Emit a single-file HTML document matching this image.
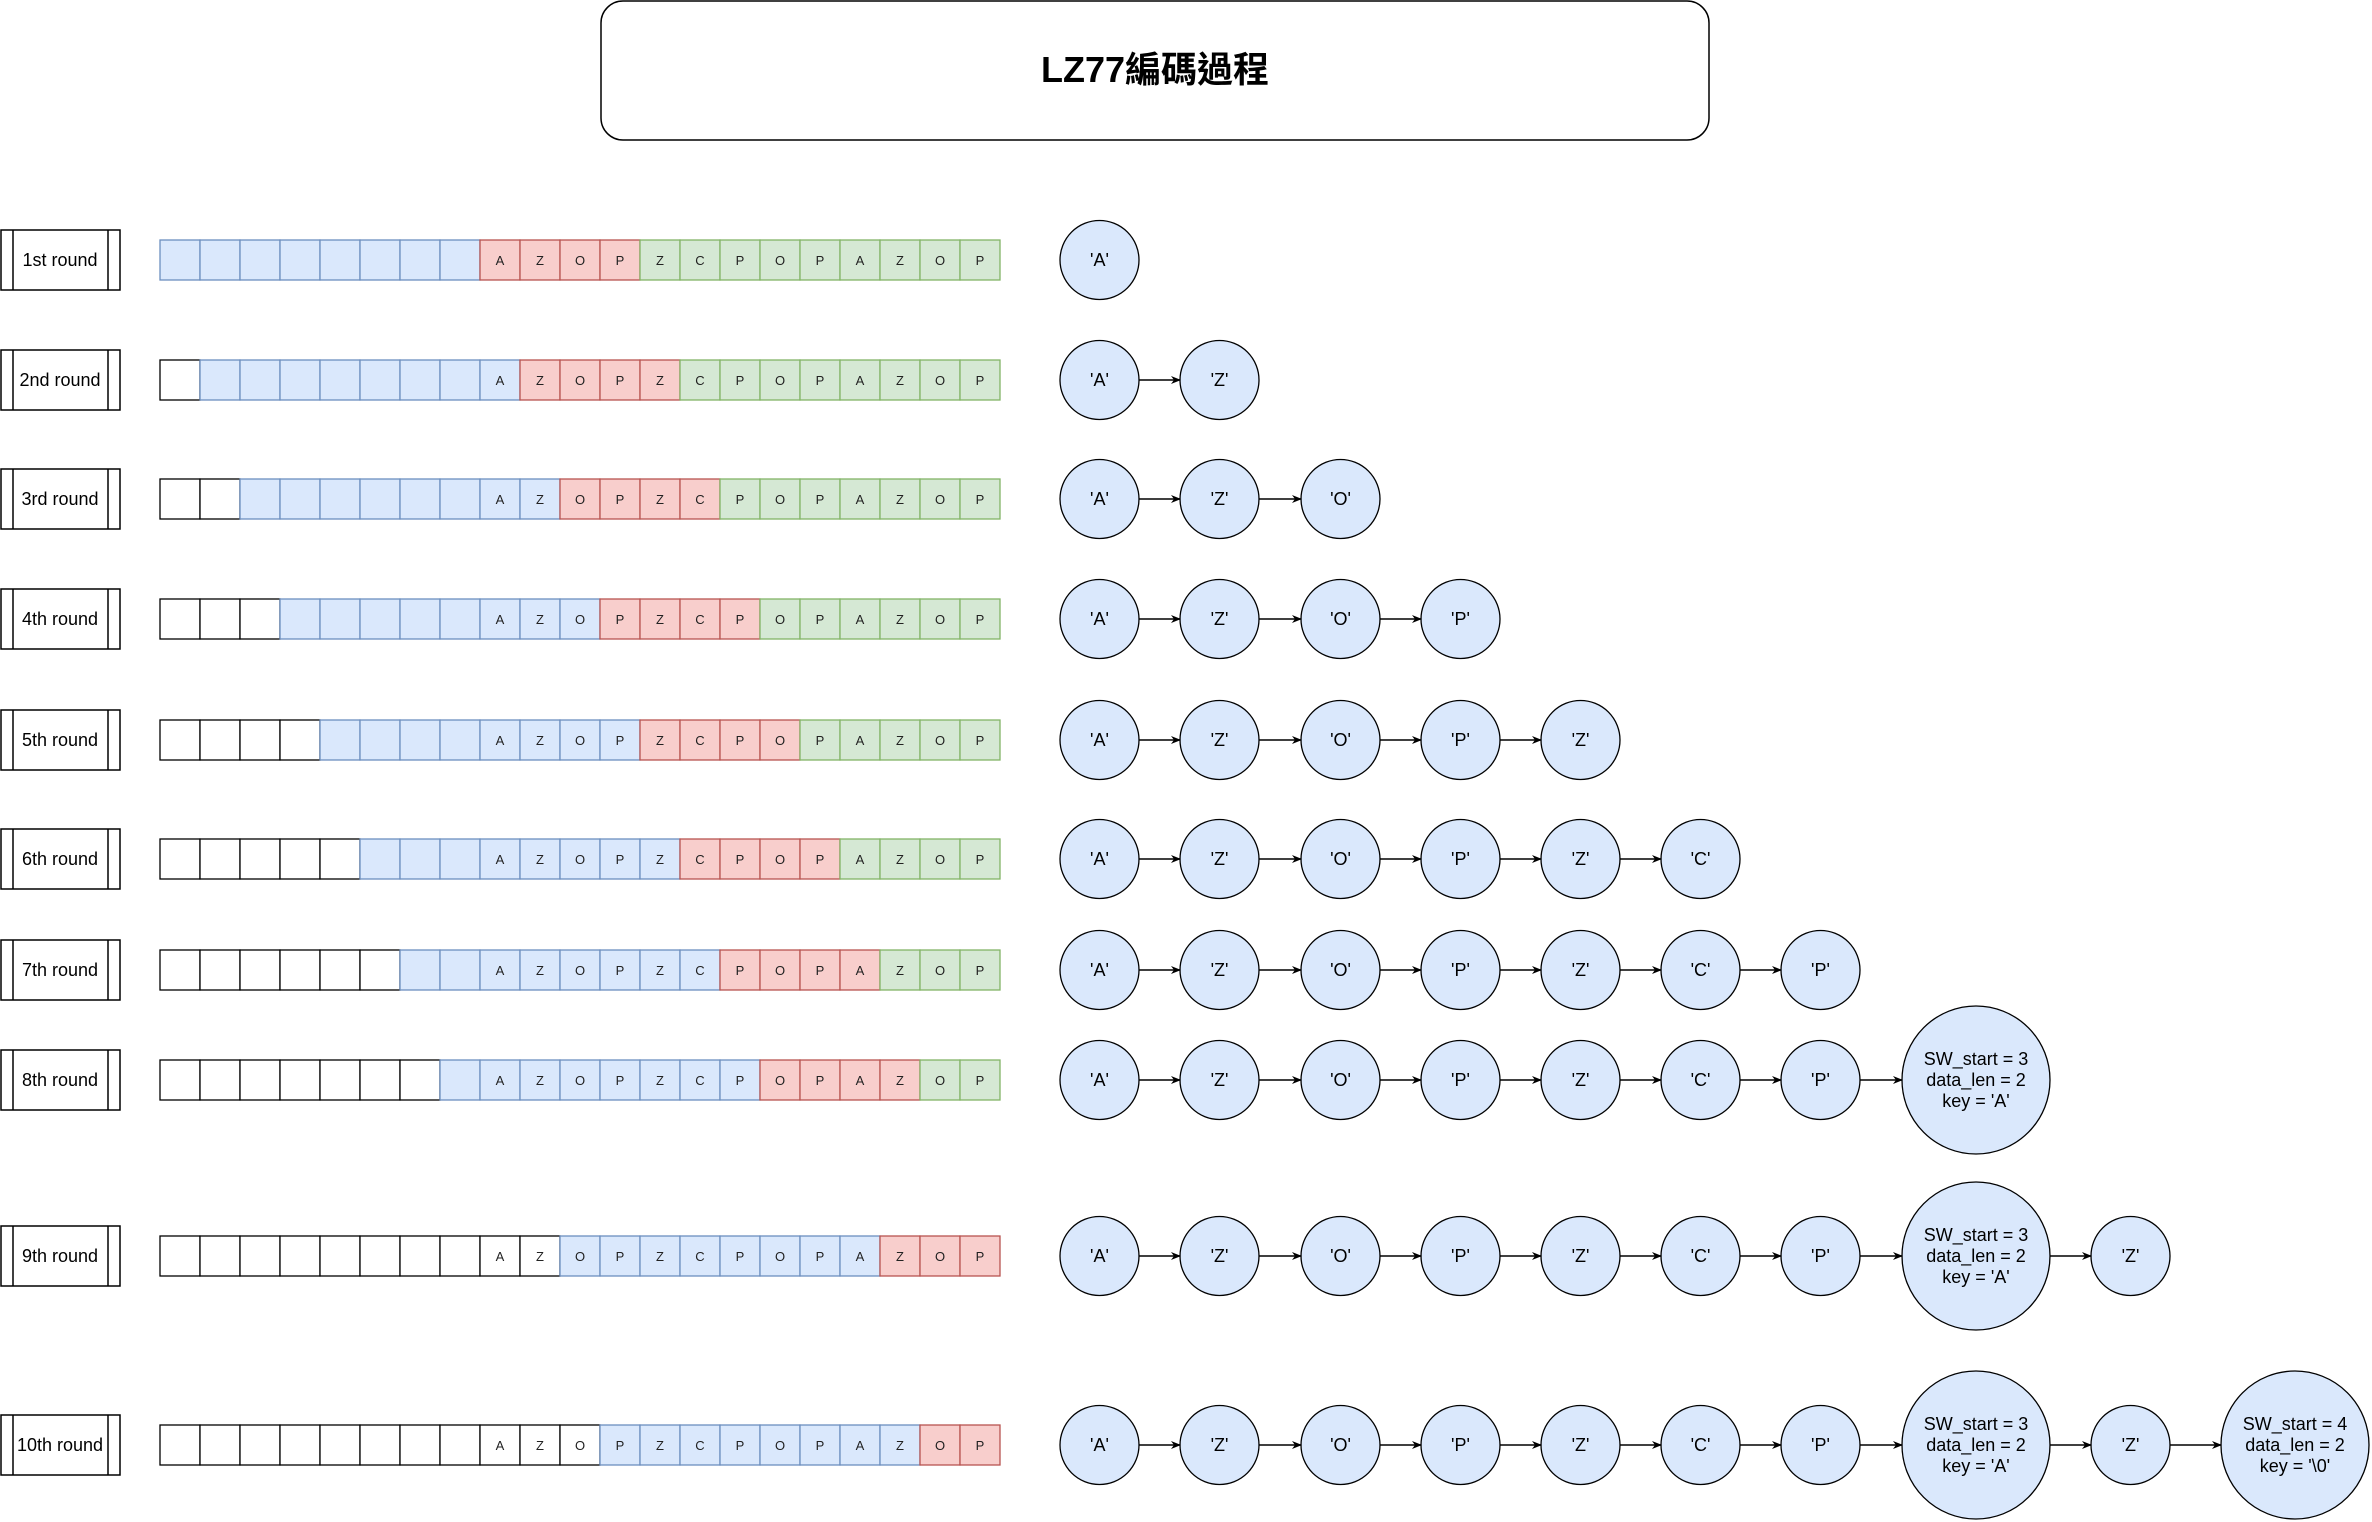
<!DOCTYPE html>
<html><head><meta charset="utf-8"><style>
html,body{margin:0;padding:0;background:#fff;width:2372px;height:1522px;overflow:hidden}
svg{display:block}
text{font-family:"Liberation Sans","Noto Sans CJK TC",sans-serif}
</style></head><body>
<svg width="2372" height="1522" viewBox="0 0 2372 1522" xmlns="http://www.w3.org/2000/svg">
<defs><marker id="ah" markerWidth="10" markerHeight="10" refX="9" refY="5" orient="auto" markerUnits="userSpaceOnUse"><path d="M0,1 L10,5 L0,9 L3,5 Z" fill="#000"/></marker></defs>
<rect x="601" y="1" width="1108" height="139" rx="22" fill="#fff" stroke="#000" stroke-width="1.5"/>
<text x="1155" y="82" font-size="36" font-weight="bold" text-anchor="middle">LZ77編碼過程</text>
<g id="g"></g>
</svg>
<script>
var NS="http://www.w3.org/2000/svg",g=document.getElementById("g");
function el(t,a,txt){var e=document.createElementNS(NS,t);for(var k in a)e.setAttribute(k,a[k]);if(txt!==undefined)e.textContent=txt;g.appendChild(e);return e;}
var ys=[260,380,499,619,740,859,970,1080,1256,1445];
var names=["1st round","2nd round","3rd round","4th round","5th round","6th round","7th round","8th round","9th round","10th round"];
var S="AZOPZCPOPAZOP";
var C={w:["#fff","#000"],b:["#dae8fc","#6c8ebf"],r:["#f8cecc","#b85450"],g:["#d5e8d4","#82b366"]};
for(var i=0;i<10;i++){
 var y=ys[i],k=i+1,cells=[];
 if(k<=8){
  for(var j=0;j<k-1;j++)cells.push(["w",""]);
  for(var j=0;j<9-k;j++)cells.push(["b",""]);
  for(var j=0;j<13;j++){var t=j<k-1?"b":(j<k+3?"r":"g");cells.push([t,S[j]]);}
 } else if(k==9){
  for(var j=0;j<8;j++)cells.push(["w",""]);
  for(var j=0;j<13;j++)cells.push([j<2?"w":(j<10?"b":"r"),S[j]]);
 } else {
  for(var j=0;j<8;j++)cells.push(["w",""]);
  for(var j=0;j<13;j++)cells.push([j<3?"w":(j<11?"b":"r"),S[j]]);
 }
 // label
 el("rect",{x:1,y:y-30,width:119,height:60,fill:"#fff",stroke:"#000","stroke-width":1.5});
 el("line",{x1:13,y1:y-30,x2:13,y2:y+30,stroke:"#000","stroke-width":1.5});
 el("line",{x1:108,y1:y-30,x2:108,y2:y+30,stroke:"#000","stroke-width":1.5});
 el("text",{x:60,y:y+6,"font-size":18,"text-anchor":"middle"},names[i]);
 var pass=[["w"],["b","r","g"]];
 cells.forEach(function(c,j){
  var x=160+j*40;
  el("rect",{x:x,y:y-20,width:40,height:40,fill:C[c[0]][0],stroke:C[c[0]][1],"stroke-width":1.3});
  if(c[1])el("text",{x:x+20,y:y+5,"font-size":13,"text-anchor":"middle","fill":"#222"},c[1]);
 });
 // circles
 var nodes=[];var lefts=[1060,1180,1301,1421,1541,1661,1781];
 for(var j=0;j<Math.min(k,7);j++)nodes.push([lefts[j],79,["'"+S[j]+"'"]]);
 if(k>=8)nodes.push([1902,148,["SW_start = 3","data_len = 2","key = 'A'"]]);
 if(k>=9)nodes.push([2091,79,["'Z'"]]);
 if(k>=10)nodes.push([2221,148,["SW_start = 4","data_len = 2","key = '\\0'"]]);
 nodes.forEach(function(n,j){
  var r=n[1]/2,cx=n[0]+r;
  el("circle",{cx:cx,cy:y,r:r,fill:"#dae8fc",stroke:"#000","stroke-width":1.3});
  var L=n[2];
  L.forEach(function(t,q){el("text",{x:cx,y:y+6+(q-(L.length-1)/2)*21,"font-size":18,"text-anchor":"middle"},t);});
  if(j>0){var p=nodes[j-1];el("line",{x1:p[0]+p[1],y1:y,x2:n[0],y2:y,stroke:"#000","stroke-width":1.5,"marker-end":"url(#ah)"});}
 });
}
</script>
</body></html>
